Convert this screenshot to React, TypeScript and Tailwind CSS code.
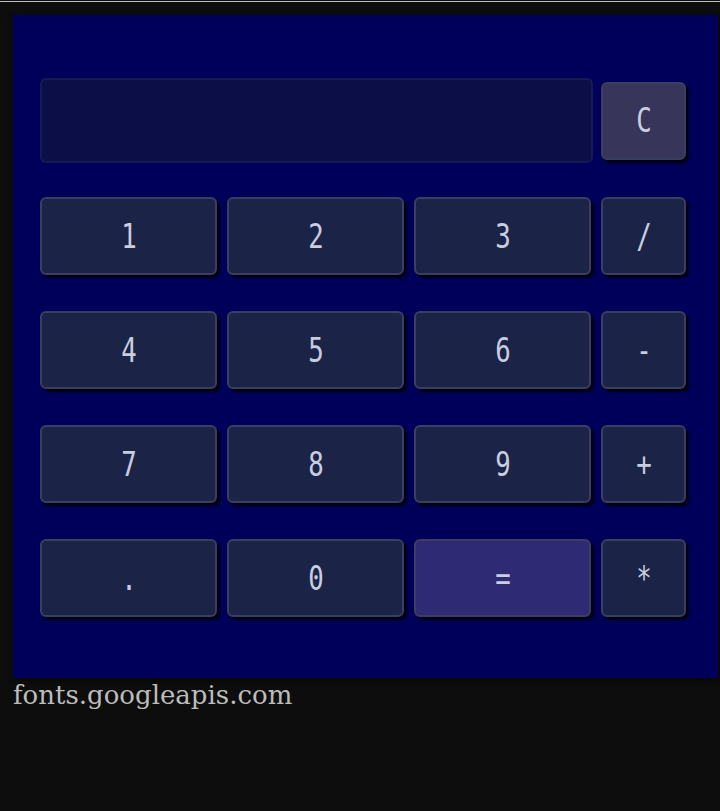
import React from "react";

const rows: string[][] = [
  ["1", "2", "3", "/"],
  ["4", "5", "6", "-"],
  ["7", "8", "9", "+"],
  [".", "0", "=", "*"],
];

function Key({ label, className }: { label: string; className: string }) {
  return (
    <button
      className={
        "h-[78px] rounded-[6px] border-2 border-[#3a3f5f] shadow-[3px_3px_3px_rgba(0,0,0,0.85)] flex items-center justify-center text-[#c9cde0] " +
        className
      }
    >
      <span className="inline-block scale-x-[0.78] text-[33px] leading-none" style={{ fontFamily: '"DejaVu Sans Mono", "Liberation Mono", monospace' }}>
        {label}
      </span>
    </button>
  );
}

export default function App() {
  return (
    <div className="min-h-[811px] w-[720px] bg-[#0d0d0d]">
      <div className="pt-px">
        <div className="h-px bg-[#bdbdbd]" />
      </div>
      <div className="ml-[13px] mt-[13px] w-[705px] h-[663px] bg-[#00005b] pl-[27px] pt-[63px] shadow-[2px_2px_6px_rgba(0,0,0,0.6)]">
        <div className="flex flex-col gap-[34px]">
          <div className="flex items-center gap-[8px] h-[85px]">
            <div className="w-[553px] h-[85px] rounded-[6px] border-2 border-[#161a52] bg-[#0c0f47]" />
            <Key label="C" className="w-[85px] bg-[#37355a]" />
          </div>
          <div className="flex flex-col gap-[36px]">
            {rows.map((row, i) => (
              <div key={i} className="grid grid-cols-[177px_177px_177px_85px] gap-x-[10px]">
                {row.map((k) => (
                  <Key key={k} label={k} className={k === "=" ? "bg-[#2e2a73]" : "bg-[#1b2447]"} />
                ))}
              </div>
            ))}
          </div>
        </div>
      </div>
      <div
        className="pl-[13px] pt-[0px] text-[26px] leading-[34px] text-[#bcbcbc]"
        style={{ fontFamily: '"DejaVu Serif", "Liberation Serif", serif' }}
      >
        fonts.googleapis.com
      </div>
    </div>
  );
}
